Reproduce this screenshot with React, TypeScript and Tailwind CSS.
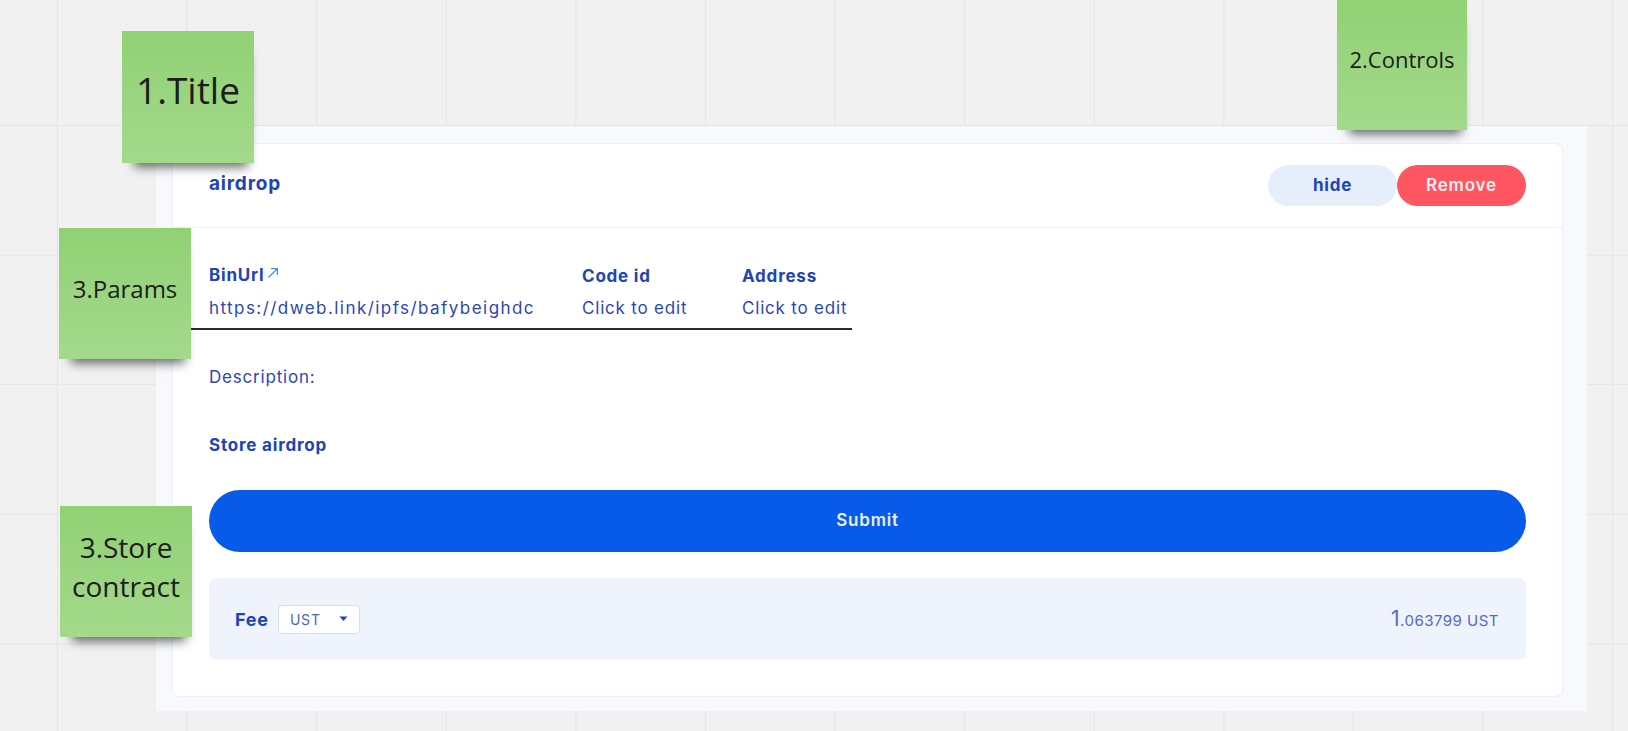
import React from "react";

function Sticky({ className, children }: { className: string; children: React.ReactNode }) {
  return (
    <div
      className={`absolute flex items-center justify-center bg-gradient-to-b from-[#91d174] to-[#a3d98b] text-center tracking-normal text-[#1c1c1c] shadow-[3px_13px_10px_-9px_rgba(0,0,0,0.6)] [font-family:'Open_Sans',sans-serif] ${className}`}
    >
      {children}
    </div>
  );
}

function ExternalIcon() {
  return (
    <svg width="12" height="12" viewBox="0 0 12 12" className="ml-[3px] -mt-[7px]" fill="none">
      <path d="M1.5 10.5 L10 2 M4 1.6 H10.4 V8" stroke="#3b8cf0" strokeWidth="1.2" />
    </svg>
  );
}

export default function App() {
  return (
    <div className="relative h-[731px] w-full overflow-hidden bg-[#f1f1f1] bg-[linear-gradient(to_right,#e4e4e4_1px,transparent_1px),linear-gradient(to_bottom,#e4e4e4_1px,transparent_1px)] bg-[size:129.6px_129.6px] bg-[position:57px_125px] tracking-[0.05em] [font-family:Inter,'Liberation_Sans',sans-serif]">
      <div className="pl-[156px] pt-[126px]">
        <div className="w-[1431px] bg-[#f7f9fd] pb-[14px] pl-4 pr-6 pt-[17px]">
          <div className="rounded-lg border border-[#edf1f7] bg-white">
            <header className="flex h-[84px] items-center justify-between border-b border-[#edf1f7] px-9">
              <h2 className="-mt-[2px] text-[19px] font-bold text-[#2043b5]">airdrop</h2>
              <div className="flex">
                <button className="h-[41px] w-[129px] rounded-full bg-[#e6edfb] text-[17px] font-bold text-[#2043b5]">
                  hide
                </button>
                <button className="h-[41px] w-[129px] rounded-full bg-[#ff5662] text-[17px] font-semibold text-[#ffeef0]">
                  Remove
                </button>
              </div>
            </header>

            <div className="px-9 pb-9 pt-[37px]">
              <div className="flex text-[#2043b5]">
                <div className="w-[373px]">
                  <div className="flex h-[22px] items-center text-[17px] font-bold">
                    BinUrl
                    <ExternalIcon />
                  </div>
                  <div className="mt-[10px] h-[22px] w-[332px] overflow-hidden whitespace-nowrap text-[17px] leading-[22px] tracking-[0.085em] text-[#2a47b9]">
                    https://dweb.link/ipfs/bafybeighdc
                  </div>
                </div>
                <div className="w-[160px]">
                  <div className="h-[22px] text-[17px] font-bold leading-[22px]">Code id</div>
                  <div className="mt-[10px] text-[17px] leading-[22px] text-[#2a47b9]">Click to edit</div>
                </div>
                <div>
                  <div className="h-[22px] text-[17px] font-bold leading-[22px]">Address</div>
                  <div className="mt-[10px] text-[17px] leading-[22px] text-[#2a47b9]">Click to edit</div>
                </div>
              </div>

              <p className="mt-[47px] text-[17px] leading-[22px] text-[#2a47b9]">Description:</p>

              <p className="mt-[46px] text-[17px] font-bold leading-[22px] text-[#2043b5]">Store airdrop</p>

              <button className="mt-[34px] h-[62px] w-full rounded-full bg-[#085ae8] text-[17px] font-semibold text-[#e9effd]">
                Submit
              </button>

              <div className="mt-[26px] flex h-[82px] items-center justify-between rounded-lg bg-[#eff3fc] pl-[26px] pr-[27px]">
                <div className="flex items-center gap-[9px]">
                  <span className="text-[18px] font-bold text-[#2043b5]">Fee</span>
                  <div className="flex h-[29px] w-[82px] items-center justify-between rounded border border-[#d6def2] bg-white pl-[11px] pr-[11px]">
                    <span className="text-[14px] text-[#4d63c9]">UST</span>
                    <svg width="9" height="6" viewBox="0 0 9 6">
                      <path d="M0.5 0.5 H8.5 L4.5 5 Z" fill="#2043b5" />
                    </svg>
                  </div>
                </div>
                <div className="flex items-baseline tracking-[0.03em] text-[#5468cd]">
                  <span className="text-[21px]">1</span>
                  <span className="text-[15px]">.063799 UST</span>
                </div>
              </div>
            </div>
          </div>
        </div>
      </div>

      <div className="absolute left-[191px] top-[328px] h-[2px] w-[661px] bg-[#2b2b2b]" />

      <Sticky className="left-[122px] top-[31px] h-[132px] w-[132px] pb-[14px] text-[37px]">1.Title</Sticky>
      <Sticky className="left-[1337px] top-[-2px] h-[132px] w-[130px] pb-[10px] text-[22px]">2.Controls</Sticky>
      <Sticky className="left-[59px] top-[228px] h-[131px] w-[132px] pb-[9px] text-[24px]">3.Params</Sticky>
      <Sticky className="left-[60px] top-[506px] h-[131px] w-[132px] pb-[9px] text-[28px] leading-[39px]">
        3.Store
        <br />
        contract
      </Sticky>
    </div>
  );
}
